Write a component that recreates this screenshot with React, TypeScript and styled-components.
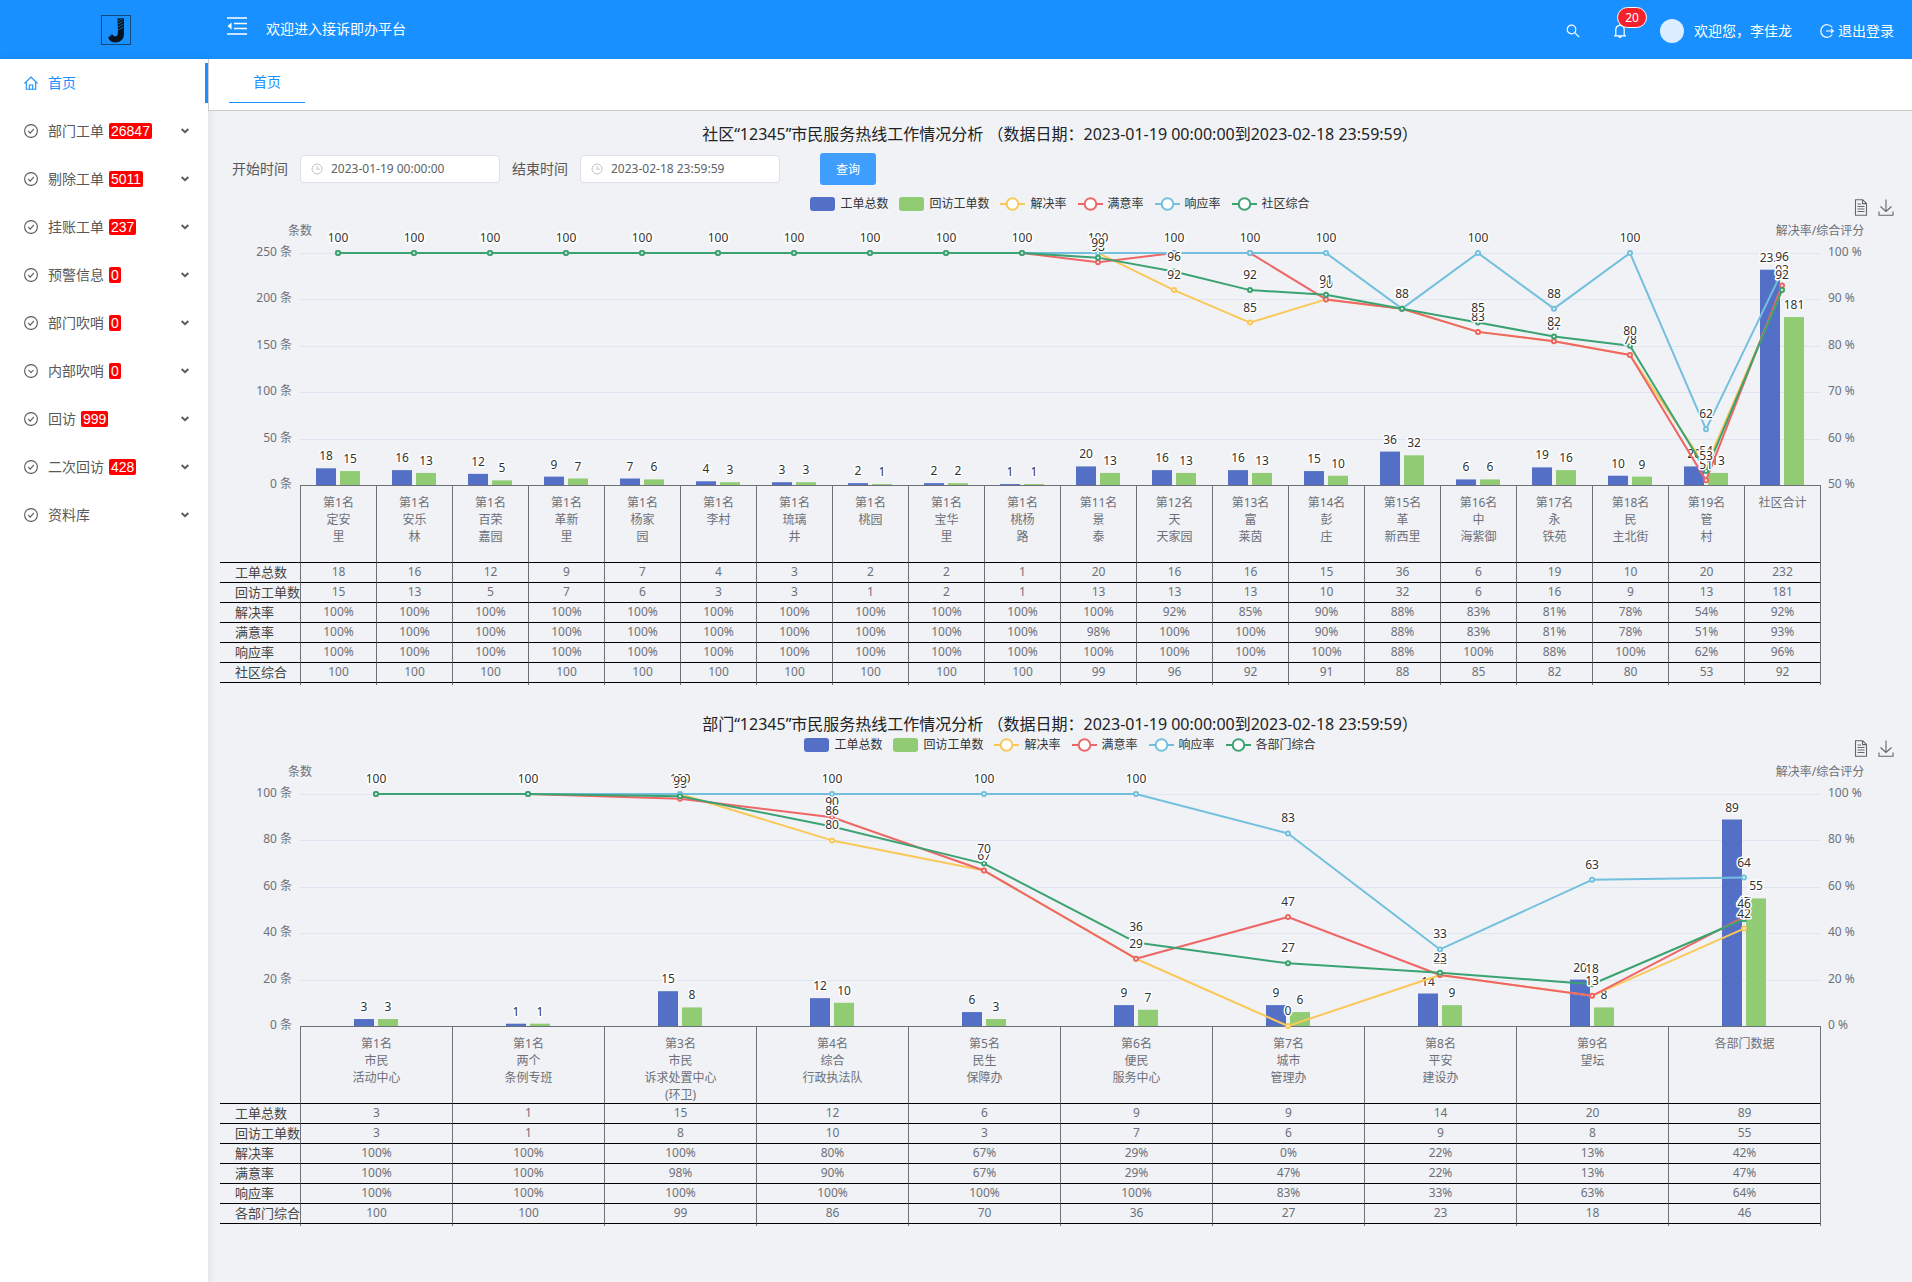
import React, { useLayoutEffect, useRef, useState } from "react";
import styled, { createGlobalStyle } from "styled-components";

const UI_FONT = `"Liberation Sans", "Noto Sans CJK SC", sans-serif`;
const CHART_FONT = `"Noto Sans", "Noto Sans CJK SC", sans-serif`;

const color = {
  primary: "#1890ff",
  page: "#f0f2f6",
  axis: "#6e7079",
  split: "#e0e6f1",
  blue: "#5470c6",
  green: "#91cc75",
  yellow: "#fac858",
  red: "#ee6666",
  sky: "#73c0de",
  teal: "#3ba272",
};

const GlobalStyle = createGlobalStyle`
  *, *::before, *::after { box-sizing: border-box; }
  body { margin: 0; background: ${color.page}; font-family: ${UI_FONT}; font-size: 14px; color: #595959; }
  button, input { font: inherit; }
  svg { display: block; flex: none; }
`;

/* ---------- page frame ---------- */

const Page = styled.div`
  display: flex;
  flex-direction: column;
  min-height: 100vh;
`;

const Header = styled.header`
  display: flex;
  align-items: center;
  height: 59px;
  padding-right: 18px;
  background: ${color.primary};
  color: #fff;
`;

const LogoArea = styled.div`
  display: flex;
  justify-content: center;
  width: 208px;
  padding-left: 24px;
`;

const IconButton = styled.button`
  position: relative;
  padding: 0;
  border: 0;
  background: none;
  color: inherit;
  cursor: pointer;
`;

const FoldButton = styled(IconButton)`
  margin: 0 19px;
  padding-bottom: 7px;
`;

const HeaderTitle = styled.span`
  padding-bottom: 2px;
  line-height: 20px;
`;

const HeaderTools = styled.div`
  display: flex;
  align-items: center;
  gap: 33px;
  margin-left: auto;
  padding-top: 2px;
`;

const Badge = styled.span`
  position: absolute;
  left: 4px;
  top: -17px;
  min-width: 30px;
  height: 21px;
  border: 1px solid #fff;
  border-radius: 11px;
  background: #f5222d;
  font: 12px/19px ${CHART_FONT};
  text-align: center;
`;

const User = styled.div`
  display: flex;
  align-items: center;
  gap: 10px;
`;

const Avatar = styled.span`
  width: 24px;
  height: 24px;
  border-radius: 50%;
  background: #dcedff;
`;

const ToolText = styled.span`
  padding-bottom: 2px;
`;

const Logout = styled.a`
  display: flex;
  align-items: center;
  gap: 4px;
  margin-left: -5px;
  color: #fff;
  text-decoration: none;
`;

const Body = styled.div`
  display: flex;
  flex: 1;
`;

const Sidebar = styled.nav`
  flex: none;
  width: 208px;
  background: #fff;
  box-shadow: 2px 0 8px rgba(29, 35, 41, 0.08);
`;

const Menu = styled.ul`
  margin: 0;
  padding: 4px 0;
  list-style: none;
  display: flex;
  flex-direction: column;
  gap: 8px;
`;

const MenuItem = styled.button<{ $active?: boolean }>`
  display: flex;
  align-items: center;
  width: 100%;
  height: 40px;
  padding: 0 19px 0 24px;
  border: 0;
  background: none;
  color: ${(p) => (p.$active ? color.primary : "#595959")};
  box-shadow: ${(p) => (p.$active ? `inset -3px 0 ${color.primary}` : "none")};
  cursor: pointer;
`;

const MenuText = styled.span`
  margin-left: 10px;
  padding-bottom: 2px;
`;

const Count = styled.span`
  margin-left: 5px;
  padding: 0 2px;
  border-radius: 2px;
  background: #f00;
  color: #fff;
  line-height: 16px;
`;

const Chevron = styled.span`
  margin-left: auto;
`;

const Main = styled.main`
  flex: 1;
  min-width: 0;
`;

const TabBar = styled.div`
  position: relative;
  height: 52px;
  padding-left: 20px;
  border-left: 1px solid #ccc;
  border-bottom: 1px solid #ccc;
  background: #fff;
`;

const Tab = styled.button`
  height: 44px;
  padding: 0 24px;
  border: 0;
  border-bottom: 1px solid ${color.primary};
  background: none;
  color: ${color.primary};
`;

const Report = styled.section`
  padding-top: 11px;
  & + & {
    padding-top: 27px;
  }
`;

const Title = styled.h1`
  margin: 0;
  color: #222;
  font: 400 16px/24px ${CHART_FONT};
  text-align: center;
`;

const Filters = styled.form`
  display: flex;
  align-items: center;
  gap: 12px;
  margin: 7px 24px 10px;
`;

const FieldLabel = styled.label`
  padding-bottom: 2px;
`;

const DateField = styled.span`
  display: flex;
  align-items: center;
  gap: 8px;
  width: 200px;
  height: 28px;
  padding: 0 10px;
  border: 1px solid #dcdfe6;
  border-radius: 4px;
  background: #fff;
  color: #c0c4cc;
`;

const DateInput = styled.input`
  flex: 1;
  min-width: 0;
  padding: 0;
  border: 0;
  outline: 0;
  background: none;
  color: #606266;
  font: 12px/24px ${CHART_FONT};
`;

const QueryButton = styled.button`
  width: 56px;
  height: 32px;
  margin-left: 28px;
  padding: 0 0 2px;
  border: 0;
  border-radius: 3px;
  background: #409eff;
  color: #fff;
  font-size: 12px;
`;

/* ---------- chart parts ---------- */

const ChartHead = styled.div`
  display: grid;
  grid-template-columns: 1fr auto 1fr;
  height: 23px;
  padding: 0 18px;
`;

const Legend = styled.ul`
  grid-column: 2;
  align-self: start;
  display: flex;
  gap: 11px;
  margin: 0;
  padding: 0;
  list-style: none;
  color: #333;
  font: 12px/18px ${CHART_FONT};
`;

const LegendItem = styled.li`
  display: flex;
  align-items: center;
  gap: 5px;
`;

const Toolbox = styled.div`
  display: flex;
  justify-content: flex-end;
  align-items: flex-end;
  gap: 10px;
  padding-bottom: 2px;
  color: #666;
`;

const Plot = styled.svg`
  position: relative;
  width: 100%;
  height: 267px;
  overflow: visible;
  font: 12px ${CHART_FONT};
`;

const AxisText = styled.text`
  fill: ${color.axis};
`;

const ValueText = styled.text`
  fill: #333;
  stroke: #fff;
  stroke-width: 3px;
  stroke-linejoin: round;
  paint-order: stroke;
  text-anchor: middle;
`;

const TableFrame = styled.div`
  margin: 0 91px 0 12px;
  border-right: 1px solid ${color.axis};
`;

const DataTable = styled.table`
  width: 100%;
  table-layout: fixed;
  border-collapse: separate;
  border-spacing: 0;
  color: ${color.axis};
  font: 12px/17px ${CHART_FONT};
`;

const CategoryHead = styled.th`
  height: 77px;
  padding: 8px 0 0;
  border-top: 1px solid ${color.axis};
  border-left: 1px solid ${color.axis};
  font-weight: 400;
  text-align: center;
  vertical-align: top;
  white-space: pre-line;
`;

const CornerCell = styled.td`
  width: 80px;
  padding: 0;
`;

const RowHead = styled.th`
  height: 20px;
  padding: 0 0 0 15px;
  border-top: 1px solid #000;
  color: #444;
  font-size: 13px;
  font-weight: 400;
  line-height: 19px;
  text-align: left;
  white-space: nowrap;
`;

const Cell = styled.td`
  padding: 0 0 1px;
  border-top: 1px solid #000;
  border-left: 1px solid ${color.axis};
  line-height: 18px;
  text-align: center;
`;

const EndCell = styled.td`
  height: 3px;
  padding: 0;
  border-top: 1px solid #000;
  & + & {
    border-left: 1px solid ${color.axis};
  }
`;

/* ---------- icons ---------- */

const Logo = () => (
  <svg width="30" height="30" viewBox="0 0 30 30">
    <rect x=".5" y=".5" width="29" height="29" fill="none" stroke="#13487c" />
    <path d="M16.500 3.500 23 3V19.500Q22.500 26.500 15 27.500Q9.500 28 7 22.500L11 19Q13 22.500 15.500 21Q17 20 17 17Z" fill="#06131f" />
    <path d="m17 6 5.500-2.500M17 9l5.500-3M17 12l5.500-3M17 15l5.500-3M8 22.500l3-3" stroke="#247cc9" strokeWidth=".7" />
  </svg>
);

const FoldIcon = () => (
  <svg width="20" height="18" viewBox="0 0 20 18" fill="none" stroke="currentColor" strokeWidth="1.6">
    <path d="M0 1h20M7 6.500h13M7 11.500h13M0 17h20" />
    <path d="M4.500 5.500v7L.5 9Z" fill="currentColor" stroke="none" />
  </svg>
);

const SearchIcon = () => (
  <svg width="14" height="14" viewBox="0 0 14 14" fill="none" stroke="currentColor" strokeWidth="1.2">
    <circle cx="5.500" cy="5.500" r="4.300" />
    <path d="m8.700 8.700 4.500 4.500" />
  </svg>
);

const BellIcon = () => (
  <svg width="14" height="14" viewBox="0 0 14 14" fill="none" stroke="currentColor" strokeWidth="1.2">
    <path d="M1 11.800h12M2.800 11.800V5.500a4.200 4.200 0 0 1 8.400 0v6.300M7 0v1.300M5.600 12.600q1.400 1.500 2.800 0" />
  </svg>
);

const LogoutIcon = () => (
  <svg width="14" height="14" viewBox="0 0 14 14" fill="none" stroke="currentColor" strokeWidth="1.2">
    <path d="M12.300 3.500a6.300 6.300 0 1 0 0 7M6 7h7M11 5l2.300 2-2.300 2" />
  </svg>
);

const HomeIcon = () => (
  <svg width="14" height="14" viewBox="0 0 14 14" fill="none" stroke="currentColor" strokeWidth="1.1">
    <path d="M.5 7.500 7 1l6.500 6.500M2.300 6.500v6.800h9.400V6.500M5.300 13V9h3.400v4" />
  </svg>
);

const StatusIcon = ({ down }: { down?: boolean }) => (
  <svg width="14" height="14" viewBox="0 0 14 14" fill="none" stroke="currentColor" strokeWidth="1.1">
    <circle cx="7" cy="7" r="6.400" />
    <path d={down ? "m4.500 6 2.500 2.700L9.500 6" : "m4.200 6.900 2 2.200 3.600-4.300"} />
  </svg>
);

const ChevronIcon = () => (
  <svg width="8" height="6" viewBox="0 0 8 6" fill="none" stroke="currentColor" strokeWidth="2">
    <path d="m.6 1 3.400 3.200L7.400 1" />
  </svg>
);

const ClockIcon = () => (
  <svg width="12" height="12" viewBox="0 0 12 12" fill="none" stroke="currentColor">
    <circle cx="6" cy="6" r="5" />
    <path d="M6 3v3.200h2.800" />
  </svg>
);

const DocIcon = () => (
  <svg width="14" height="17" viewBox="0 0 14 17" fill="none" stroke="currentColor" strokeWidth="1.1">
    <path d="M1.500.8h7.200l3.800 3.600v11.800h-11ZM8.500.8v3.800h4M3.500 5h3.500M3.500 7.500h7M3.500 10h7M3.500 12.500h7" />
  </svg>
);

const DownloadIcon = () => (
  <svg width="16" height="17" viewBox="0 0 16 17" fill="none" stroke="currentColor" strokeWidth="1.1">
    <path d="M8 .5v11.800M2.500 7.500 8 12.500l5.500-5M1 12.500v3.700h14v-3.700" />
  </svg>
);

/* ---------- data ---------- */

type ChartData = {
  categories: string[];
  leftMax: number;
  leftStep: number;
  rightMin: number;
  rightStep: number;
  totalLabel: string;
  rows: number[][];
};

const full = (n: number) => Array<number>(n).fill(100);

const community: ChartData = {
  categories: [
    "第1名\n定安\n里", "第1名\n安乐\n林", "第1名\n百荣\n嘉园", "第1名\n革新\n里", "第1名\n杨家\n园",
    "第1名\n李村", "第1名\n琉璃\n井", "第1名\n桃园", "第1名\n宝华\n里", "第1名\n桃杨\n路",
    "第11名\n景\n泰", "第12名\n天\n天家园", "第13名\n富\n莱茵", "第14名\n彭\n庄", "第15名\n革\n新西里",
    "第16名\n中\n海紫御", "第17名\n永\n铁苑", "第18名\n民\n主北街", "第19名\n管\n村", "社区合计",
  ],
  leftMax: 250,
  leftStep: 50,
  rightMin: 50,
  rightStep: 10,
  totalLabel: "社区综合",
  rows: [
    [18, 16, 12, 9, 7, 4, 3, 2, 2, 1, 20, 16, 16, 15, 36, 6, 19, 10, 20, 232],
    [15, 13, 5, 7, 6, 3, 3, 1, 2, 1, 13, 13, 13, 10, 32, 6, 16, 9, 13, 181],
    [...full(11), 92, 85, 90, 88, 83, 81, 78, 54, 92],
    [...full(10), 98, 100, 100, 90, 88, 83, 81, 78, 51, 93],
    [...full(14), 88, 100, 88, 100, 62, 96],
    [...full(10), 99, 96, 92, 91, 88, 85, 82, 80, 53, 92],
  ],
};

const department: ChartData = {
  categories: [
    "第1名\n市民\n活动中心", "第1名\n两个\n条例专班", "第3名\n市民\n诉求处置中心\n(环卫)", "第4名\n综合\n行政执法队",
    "第5名\n民生\n保障办", "第6名\n便民\n服务中心", "第7名\n城市\n管理办", "第8名\n平安\n建设办", "第9名\n望坛", "各部门数据",
  ],
  leftMax: 100,
  leftStep: 20,
  rightMin: 0,
  rightStep: 20,
  totalLabel: "各部门综合",
  rows: [
    [3, 1, 15, 12, 6, 9, 9, 14, 20, 89],
    [3, 1, 8, 10, 3, 7, 6, 9, 8, 55],
    [100, 100, 100, 80, 67, 29, 0, 22, 13, 42],
    [100, 100, 98, 90, 67, 29, 47, 22, 13, 47],
    [100, 100, 100, 100, 100, 100, 83, 33, 63, 64],
    [100, 100, 99, 86, 70, 36, 27, 23, 18, 46],
  ],
};

const seriesColors = [color.blue, color.green, color.yellow, color.red, color.sky, color.teal];
const seriesNames = (d: ChartData) => ["工单总数", "回访工单数", "解决率", "满意率", "响应率", d.totalLabel];

/* ---------- chart ---------- */

const SIDE = 92;
const TOP = 35;
const HEIGHT = 232;
const BOTTOM = TOP + HEIGHT;

function ComboPlot({ data }: { data: ChartData }) {
  const ref = useRef<SVGSVGElement>(null);
  const [width, setWidth] = useState(1704);

  useLayoutEffect(() => {
    const el = ref.current;
    if (!el) return;
    const measure = () => setWidth(el.getBoundingClientRect().width);
    measure();
    const observer = new ResizeObserver(measure);
    observer.observe(el);
    return () => observer.disconnect();
  }, []);

  const right = width - SIDE;
  const band = (right - SIDE) / data.categories.length;
  const center = (i: number) => SIDE + band * (i + 0.5);
  const barTop = (v: number) => BOTTOM - (v / data.leftMax) * HEIGHT;
  const lineY = (v: number) => BOTTOM - ((v - data.rightMin) / (100 - data.rightMin)) * HEIGHT;
  const bars = data.rows.slice(0, 2);
  const lines = data.rows.slice(2);

  return (
    <Plot ref={ref}>
      <AxisText x={SIDE} y={17} textAnchor="middle">条数</AxisText>
      <AxisText x={right} y={17} textAnchor="middle">解决率/综合评分</AxisText>
      {[0, 1, 2, 3, 4, 5].map((n) => {
        const y = Math.round(BOTTOM - (HEIGHT / 5) * n);
        return (
          <g key={n}>
            {n > 0 && <path d={`M${SIDE} ${y + 0.5}H${right}`} stroke={color.split} />}
            <AxisText x={SIDE - 8} y={y + 3} textAnchor="end">{n * data.leftStep} 条</AxisText>
            <AxisText x={right + 8} y={y + 3}>{data.rightMin + n * data.rightStep} %</AxisText>
          </g>
        );
      })}
      {bars.map((row, s) =>
        row.map((v, i) => (
          <rect key={`${s}-${i}`} x={center(i) + (s ? 2 : -22)} y={barTop(v)} width={20} height={BOTTOM - barTop(v)} fill={seriesColors[s]} />
        ))
      )}
      {bars.map((row, s) =>
        row.map((v, i) => (
          <ValueText key={`${s}-${i}`} x={center(i) + (s ? 12 : -12)} y={barTop(v) - 8}>{v}</ValueText>
        ))
      )}
      {lines.map((row, s) => (
        <g key={s} stroke={seriesColors[s + 2]} strokeWidth={2}>
          <polyline points={row.map((v, i) => `${center(i)},${lineY(v)}`).join(" ")} fill="none" strokeLinejoin="bevel" />
          {row.map((v, i) => (
            <circle key={i} cx={center(i)} cy={lineY(v)} r={2} fill="#fff" />
          ))}
        </g>
      ))}
      {lines.map((row, s) =>
        row.map((v, i) => (
          <ValueText key={`${s}-${i}`} x={center(i)} y={lineY(v) - 11}>{v}</ValueText>
        ))
      )}
    </Plot>
  );
}

function LegendMark({ index }: { index: number }) {
  const c = seriesColors[index];
  return (
    <svg width="25" height="14" viewBox="0 0 25 14">
      {index < 2 ? (
        <rect width="25" height="14" rx="3" fill={c} />
      ) : (
        <g stroke={c} strokeWidth="2">
          <path d="M0 7h25" />
          <circle cx="12.500" cy="7" r="5.800" fill="#fff" />
        </g>
      )}
    </svg>
  );
}

function Chart({ data }: { data: ChartData }) {
  const names = seriesNames(data);
  return (
    <>
      <ChartHead>
        <Legend>
          {names.map((name, i) => (
            <LegendItem key={name}>
              <LegendMark index={i} />
              {name}
            </LegendItem>
          ))}
        </Legend>
        <Toolbox>
          <IconButton type="button" aria-label="数据视图"><DocIcon /></IconButton>
          <IconButton type="button" aria-label="保存为图片"><DownloadIcon /></IconButton>
        </Toolbox>
      </ChartHead>
      <ComboPlot data={data} />
      <TableFrame>
        <DataTable>
          <thead>
            <tr>
              <CornerCell />
              {data.categories.map((c) => (
                <CategoryHead key={c} scope="col">{c}</CategoryHead>
              ))}
            </tr>
          </thead>
          <tbody>
            {data.rows.map((row, r) => (
              <tr key={names[r]}>
                <RowHead scope="row">{names[r]}</RowHead>
                {row.map((v, i) => (
                  <Cell key={i}>{r > 1 && r < 5 ? `${v}%` : v}</Cell>
                ))}
              </tr>
            ))}
          </tbody>
          <tfoot>
            <tr>
              <EndCell />
              {data.categories.map((c) => (
                <EndCell key={c} />
              ))}
            </tr>
          </tfoot>
        </DataTable>
      </TableFrame>
    </>
  );
}

/* ---------- page ---------- */

const menu: { label: string; count?: number; down?: boolean }[] = [
  { label: "部门工单", count: 26847 },
  { label: "剔除工单", count: 5011 },
  { label: "挂账工单", count: 237 },
  { label: "预警信息", count: 0 },
  { label: "部门吹哨", count: 0 },
  { label: "内部吹哨", count: 0, down: true },
  { label: "回访", count: 999 },
  { label: "二次回访", count: 428 },
  { label: "资料库" },
];

export default function App() {
  return (
    <Page>
      <GlobalStyle />
      <Header>
        <LogoArea><Logo /></LogoArea>
        <FoldButton type="button" aria-label="收起菜单"><FoldIcon /></FoldButton>
        <HeaderTitle>欢迎进入接诉即办平台</HeaderTitle>
        <HeaderTools>
          <IconButton type="button" aria-label="搜索"><SearchIcon /></IconButton>
          <IconButton type="button" aria-label="通知">
            <BellIcon />
            <Badge>20</Badge>
          </IconButton>
          <User>
            <Avatar />
            <ToolText>欢迎您，李佳龙</ToolText>
          </User>
          <Logout href="#logout"><LogoutIcon /><ToolText>退出登录</ToolText></Logout>
        </HeaderTools>
      </Header>
      <Body>
        <Sidebar>
          <Menu>
            <li>
              <MenuItem type="button" $active>
                <HomeIcon />
                <MenuText>首页</MenuText>
              </MenuItem>
            </li>
            {menu.map((item) => (
              <li key={item.label}>
                <MenuItem type="button">
                  <StatusIcon down={item.down} />
                  <MenuText>{item.label}</MenuText>
                  {item.count !== undefined && <Count>{item.count}</Count>}
                  <Chevron><ChevronIcon /></Chevron>
                </MenuItem>
              </li>
            ))}
          </Menu>
        </Sidebar>
        <Main>
          <TabBar><Tab type="button">首页</Tab></TabBar>
          <Report>
            <Title>社区“12345”市民服务热线工作情况分析 （数据日期：2023-01-19 00:00:00到2023-02-18 23:59:59）</Title>
            <Filters onSubmit={(e) => e.preventDefault()}>
              <FieldLabel htmlFor="start">开始时间</FieldLabel>
              <DateField><ClockIcon /><DateInput id="start" defaultValue="2023-01-19 00:00:00" /></DateField>
              <FieldLabel htmlFor="end">结束时间</FieldLabel>
              <DateField><ClockIcon /><DateInput id="end" defaultValue="2023-02-18 23:59:59" /></DateField>
              <QueryButton type="submit">查询</QueryButton>
            </Filters>
            <Chart data={community} />
          </Report>
          <Report>
            <Title as="h2">部门“12345”市民服务热线工作情况分析 （数据日期：2023-01-19 00:00:00到2023-02-18 23:59:59）</Title>
            <Chart data={department} />
          </Report>
        </Main>
      </Body>
    </Page>
  );
}
